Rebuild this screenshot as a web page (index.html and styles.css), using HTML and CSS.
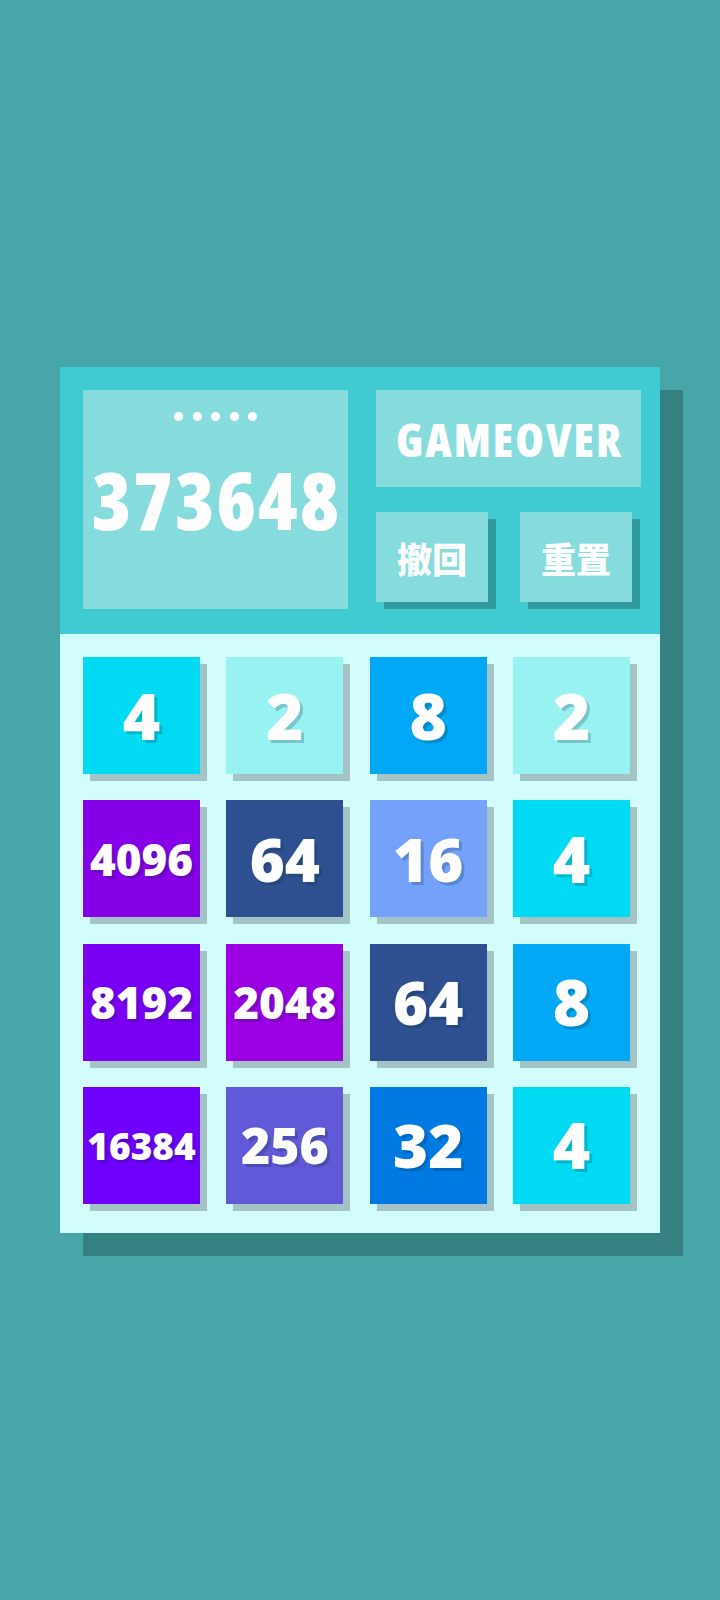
FILE: index.html
```html
<!DOCTYPE html>
<html lang="zh">
<head>
<meta charset="utf-8">
<title>2048</title>
<link rel="stylesheet" href="styles.css">
</head>
<body>
<main class="page">
  <section class="panel">
    <header class="header">
      <div class="score">
        <div class="dots"><span></span><span></span><span></span><span></span><span></span></div>
        <div class="score-num">373648</div>
      </div>
      <div class="side">
        <div class="status">GAMEOVER</div>
        <div class="buttons">
          <div class="btn">撤回</div>
          <div class="btn">重置</div>
        </div>
      </div>
    </header>
    <div class="grid">
      <div class="tile t-4">4</div>
      <div class="tile t-2">2</div>
      <div class="tile t-8">8</div>
      <div class="tile t-2">2</div>
      <div class="tile t-4096 small">4096</div>
      <div class="tile t-64 two">64</div>
      <div class="tile t-16 two">16</div>
      <div class="tile t-4">4</div>
      <div class="tile t-8192 small">8192</div>
      <div class="tile t-2048 small">2048</div>
      <div class="tile t-64 two">64</div>
      <div class="tile t-8">8</div>
      <div class="tile t-16384 tiny">16384</div>
      <div class="tile t-256 mid">256</div>
      <div class="tile t-32 two">32</div>
      <div class="tile t-4">4</div>
    </div>
  </section>
</main>
</body>
</html>
```
FILE: styles.css
```css
html, body {
  margin: 0;
  padding: 0;
}
body {
  background: #47a6a7;
  font-family: "Noto Sans", "Noto Sans CJK SC", sans-serif;
  color: #fff;
}
.page {
  min-height: 100vh;
  display: flex;
  align-items: center;
  justify-content: center;
}
.panel {
  width: 600px;
  box-shadow: 23px 23px 0 #358080;
}
.header {
  background: #40cbd3;
  height: 267px;
  box-sizing: border-box;
  padding: 23px 19px 25px 23px;
  display: flex;
  gap: 28px;
}
.score {
  width: 265px;
  height: 219px;
  background: #86dcdd;
  display: flex;
  flex-direction: column;
  align-items: center;
}
.dots {
  display: flex;
  gap: 9.5px;
  margin-top: 22px;
}
.dots span {
  width: 9px;
  height: 9px;
  border-radius: 50%;
  background: #fff;
}
.score-num {
  font-family: "Open Sans", sans-serif;
  font-weight: 800;
  font-stretch: 75%;
  font-size: 80px;
  letter-spacing: 2px;
  padding-left: 2px;
  line-height: 1;
  margin-top: 38px;
}
.side {
  width: 265px;
  display: flex;
  flex-direction: column;
}
.status {
  height: 97px;
  background: #86dcdd;
  display: flex;
  align-items: center;
  justify-content: center;
  font-family: "Open Sans", sans-serif;
  font-weight: 800;
  font-stretch: 75%;
  font-size: 46px;
  letter-spacing: 2px;
  padding-left: 2px;
}
.buttons {
  margin-top: 25px;
  display: flex;
  gap: 32px;
}
.btn {
  width: 112px;
  height: 90px;
  background: #86dcdd;
  box-shadow: 8px 7px 0 #2e9a9e;
  display: flex;
  align-items: center;
  justify-content: center;
  font-family: "Noto Sans CJK SC", sans-serif;
  font-weight: 900;
  font-size: 35px;
}
.grid {
  background: #d3fdfd;
  padding: 23px 30px 29px 23px;
  display: grid;
  grid-template-columns: repeat(4, 117px);
  grid-auto-rows: 117px;
  gap: 26.33px;
}
.tile {
  display: flex;
  align-items: center;
  justify-content: center;
  box-shadow: 7px 7px 0 #a4c3c4;
  font-family: "Noto Sans", sans-serif;
  font-weight: 900;
  font-size: 64px;
  line-height: 1;
  text-shadow: 3px 3px 0 rgba(0, 40, 60, 0.22);
}
.tile.two { font-size: 60px; }
.tile.mid { font-size: 50px; }
.tile.small { font-size: 44px; }
.tile.tiny { font-size: 37px; }
.t-2 { background: #99f2f2; }
.t-4 { background: #00dbf3; }
.t-8 { background: #00a8f5; }
.t-16 { background: #74a2fb; }
.t-32 { background: #0079e3; }
.t-64 { background: #2f5090; }
.t-256 { background: #6259d9; }
.t-2048 { background: #9b00e3; }
.t-4096 { background: #8600e8; }
.t-8192 { background: #7a00f3; }
.t-16384 { background: #6e00fb; }
```
